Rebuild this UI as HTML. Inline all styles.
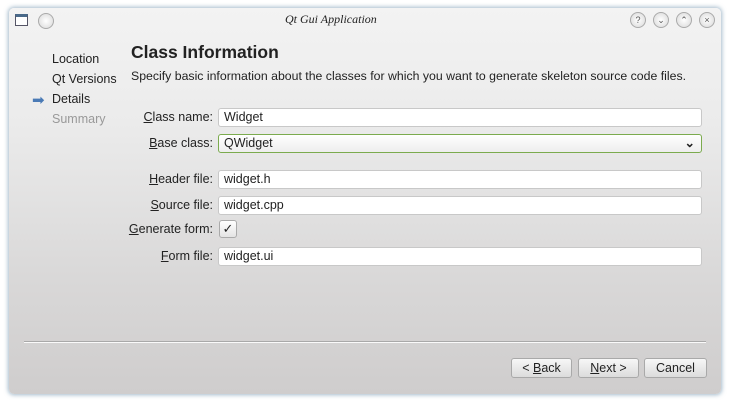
<!DOCTYPE html>
<html><head><style>
body{margin:0;width:730px;height:401px;background:#fff;font-family:"Liberation Sans",sans-serif;position:relative;overflow:hidden;color:#222}
.win{position:absolute;left:9px;top:8px;width:712px;height:386px;border-radius:5px;background:linear-gradient(#f3f3f3 0%,#ebebeb 30%,#d9d8d8 70%,#cfcdcd 100%);box-shadow:0 0 4px 1px rgba(90,130,160,.55)}
.t{position:absolute;font-size:12.5px;white-space:nowrap}
.lbl{position:absolute;font-size:12.5px;text-align:right;width:120px;left:93px;white-space:nowrap}
.in{position:absolute;left:218px;width:477px;height:17px;background:#fff;border:1px solid #c8c8c8;border-radius:3px;font-size:12.5px;line-height:17px;padding-left:5px}
.btn{position:absolute;top:358px;height:18px;border:1px solid #a9a9a9;border-radius:3px;background:linear-gradient(#f7f7f7,#dcdcdc);font-size:12.5px;text-align:center;line-height:18px}
.tb{position:absolute;top:12px;width:14px;height:14px;border-radius:50%;border:1px solid #aaa;background:radial-gradient(#fff,#d8d8d8);font-size:9px;text-align:center;line-height:14px;color:#555}
u{text-decoration:underline}
</style></head><body>
<div class="win"></div>
<div style="position:absolute;left:15px;top:14px;width:11px;height:8px;border:1px solid #556;background:#fff;border-top:3px solid #4a6a8a"></div>
<div class="tb" style="left:38px;top:13px"></div>
<div class="t" style="left:285px;top:12px;font-family:'Liberation Serif',serif;font-style:italic;font-size:12px">Qt Gui Application</div>
<div class="tb" style="left:630px">?</div>
<div class="tb" style="left:653px">⌄</div>
<div class="tb" style="left:676px">⌃</div>
<div class="tb" style="left:699px">×</div>
<div class="t" style="left:52px;top:52px">Location</div>
<div class="t" style="left:52px;top:72px">Qt Versions</div>
<div class="t" style="left:32px;top:91px;color:#4a7ab5;font-size:15px">➡</div>
<div class="t" style="left:52px;top:92px">Details</div>
<div class="t" style="left:52px;top:112px;color:#999">Summary</div>
<div class="t" style="left:131px;top:42px;font-size:17.5px;font-weight:bold">Class Information</div>
<div class="t" style="left:131px;top:69px;font-size:12.3px">Specify basic information about the classes for which you want to generate skeleton source code files.</div>
<div class="lbl" style="top:110px"><u>C</u>lass name:</div>
<div class="in" style="top:108px">Widget</div>
<div class="lbl" style="top:136px"><u>B</u>ase class:</div>
<div class="in" style="top:134px;border-color:#7bab4e;background:linear-gradient(#fff,#eee)">QWidget<span style="position:absolute;right:6px;top:0;font-weight:bold">⌄</span></div>
<div class="lbl" style="top:172px"><u>H</u>eader file:</div>
<div class="in" style="top:170px">widget.h</div>
<div class="lbl" style="top:198px"><u>S</u>ource file:</div>
<div class="in" style="top:196px">widget.cpp</div>
<div class="lbl" style="top:222px"><u>G</u>enerate form:</div>
<div style="position:absolute;left:219px;top:220px;width:16px;height:16px;border:1px solid #aaa;border-radius:3px;background:linear-gradient(#fff,#e4e4e4);font-size:13px;line-height:16px;text-align:center">✓</div>
<div class="lbl" style="top:249px"><u>F</u>orm file:</div>
<div class="in" style="top:247px">widget.ui</div>
<div style="position:absolute;left:24px;top:341px;width:682px;height:1px;background:#a9a9a9;border-bottom:1px solid #fafafa"></div>
<div class="btn" style="left:511px;width:59px">&lt; <u>B</u>ack</div>
<div class="btn" style="left:578px;width:59px"><u>N</u>ext &gt;</div>
<div class="btn" style="left:644px;width:61px">Cancel</div>
</body></html>
